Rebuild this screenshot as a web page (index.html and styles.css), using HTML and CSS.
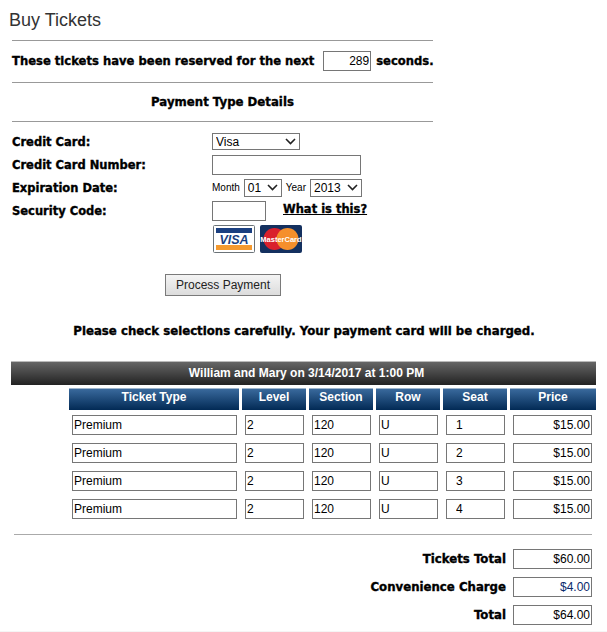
FILE: index.html
```html
<!DOCTYPE html>
<html lang="en">
<head>
	<meta charset="UTF-8">
	<meta name="viewport" content="width=device-width, initial-scale=1.0">
	<title>Buy Tickets</title>
	<link rel="stylesheet" href="styles.css">
</head>
<body>
	<h1 class="page-title">Buy Tickets</h1>
	<div class="payment">
		<div class="timer-row">
			<span class="strong">These tickets have been reserved for the next</span>
			<input type="text" class="field timer-field" value="289" readonly>
			<span class="strong">seconds.</span>
		</div>
		<div class="section-title strong">Payment Type Details</div>
		<div class="form-grid">
			<label class="strong" for="cardType">Credit Card:</label>
			<div class="form-cell">
				<select id="cardType" class="field card-select"><option>Visa</option></select>
			</div>
			<label class="strong" for="cardNumber">Credit Card Number:</label>
			<div class="form-cell">
				<input type="text" id="cardNumber" class="field number-field">
			</div>
			<label class="strong" for="expMonth">Expiration Date:</label>
			<div class="form-cell exp-cell">
				<span class="exp-label">Month</span>
				<select id="expMonth" class="field month-select"><option>01</option></select>
				<span class="exp-label">Year</span>
				<select class="field year-select"><option>2013</option></select>
			</div>
			<label class="strong" for="secCode">Security Code:</label>
			<div class="form-cell sec-cell">
				<input type="text" id="secCode" class="field sec-field">
				<a href="#" class="strong what-link">What is this?</a>
			</div>
		</div>
		<div class="card-logos">
			<svg class="logo" width="42" height="28" viewBox="0 0 42 28">
				<rect x="0.5" y="0.5" width="41" height="27" rx="1" fill="#fff" stroke="#6b7378"/>
				<rect x="3" y="3" width="36" height="5" fill="#1a3f80"/>
				<rect x="3" y="20" width="36" height="5" fill="#f59a2f"/>
				<text x="21" y="18.5" class="visa-text">VISA</text>
			</svg>
			<svg class="logo" width="42" height="28" viewBox="0 0 42 28">
				<rect width="42" height="28" rx="2" fill="#14305f"/>
				<circle cx="14.5" cy="14" r="11" fill="#d9202c"/>
				<circle cx="27.5" cy="14" r="11" fill="#f58f2c"/>
				<text x="21" y="16.5" class="mc-text">MasterCard</text>
			</svg>
		</div>
		<div class="submit-row">
			<button type="button" class="process-btn">Process Payment</button>
		</div>
	</div>
	<p class="notice strong">Please check selections carefully. Your payment card will be charged.</p>
	<div class="event-bar">William and Mary on 3/14/2017 at 1:00 PM</div>
	<div class="ticket-grid">
		<div class="col-head">Ticket Type</div>
		<div class="col-head">Level</div>
		<div class="col-head">Section</div>
		<div class="col-head">Row</div>
		<div class="col-head">Seat</div>
		<div class="col-head">Price</div>

		<input class="field cell" value="Premium" readonly>
		<input class="field cell" value="2" readonly>
		<input class="field cell" value="120" readonly>
		<input class="field cell" value="U" readonly>
		<input class="field cell seat" value="1" readonly>
		<input class="field cell price" value="$15.00" readonly>

		<input class="field cell" value="Premium" readonly>
		<input class="field cell" value="2" readonly>
		<input class="field cell" value="120" readonly>
		<input class="field cell" value="U" readonly>
		<input class="field cell seat" value="2" readonly>
		<input class="field cell price" value="$15.00" readonly>

		<input class="field cell" value="Premium" readonly>
		<input class="field cell" value="2" readonly>
		<input class="field cell" value="120" readonly>
		<input class="field cell" value="U" readonly>
		<input class="field cell seat" value="3" readonly>
		<input class="field cell price" value="$15.00" readonly>

		<input class="field cell" value="Premium" readonly>
		<input class="field cell" value="2" readonly>
		<input class="field cell" value="120" readonly>
		<input class="field cell" value="U" readonly>
		<input class="field cell seat" value="4" readonly>
		<input class="field cell price" value="$15.00" readonly>
	</div>
	<div class="totals">
		<div class="total-row">
			<span class="strong">Tickets Total</span>
			<input class="field total-field" value="$60.00" readonly>
		</div>
		<div class="total-row">
			<span class="strong">Convenience Charge</span>
			<input class="field total-field charge" value="$4.00" readonly>
		</div>
		<div class="total-row">
			<span class="strong">Total</span>
			<input class="field total-field" value="$64.00" readonly>
		</div>
	</div>
	<div class="page-foot"></div>
</body>
</html>
```

FILE: styles.css
```css
body {
	margin: 0;
	background-color: #fff;
	color: #000;
	font-family: "Liberation Sans", Arial, sans-serif;
	font-size: 12px;
	overflow: hidden;
}
.strong {
	font-family: "DejaVu Sans", Verdana, sans-serif;
	font-size: 11.6px;
	font-weight: 700;
	color: #000;
	-webkit-text-stroke: 0.35px #000;
}
.page-title {
	margin: 0;
	padding: 10px 0 0 9px;
	height: 30px;
	box-sizing: border-box;
	font-size: 18px;
	line-height: 21px;
	font-weight: 400;
	color: #333;
}
.field {
	box-sizing: border-box;
	margin: 0;
	padding: 0 1px;
	border: 1px solid #767676;
	border-radius: 0;
	background-color: #fff;
	color: #000;
	font-family: "Liberation Sans", Arial, sans-serif;
	font-size: 12px;
	outline: none;
}
select.field {
	appearance: none;
	background-image: url("data:image/svg+xml,%3Csvg xmlns='http://www.w3.org/2000/svg' width='11' height='7'%3E%3Cpath d='M1 1l4.5 4.5 4.5-4.5' fill='none' stroke='%23222' stroke-width='1.6'/%3E%3C/svg%3E");
	background-repeat: no-repeat;
	background-position: right 3px center;
}
.payment {
	width: 421px;
	margin: 10px 0 0 12px;
	border-top: 1px solid #999;
}
.timer-row {
	display: flex;
	align-items: center;
	height: 42px;
	padding-bottom: 1px;
	box-sizing: border-box;
	border-bottom: 1px solid #999;
	white-space: nowrap;
}
.timer-field {
	width: 48px;
	height: 20px;
	margin: 0 5px 0 9px;
	text-align: right;
}
.section-title {
	height: 38px;
	line-height: 38px;
	text-align: center;
	border-bottom: 1px solid #999;
	font-size: 11.75px;
}
.form-grid {
	display: grid;
	grid-template-columns: 200px 1fr;
	grid-auto-rows: 23px;
	margin-top: 8px;
}
.form-grid .strong {
	font-size: 11.5px;
}
.form-grid label {
	display: flex;
	align-items: center;
}
.form-cell {
	display: flex;
	align-items: center;
}
.card-select {
	width: 88px;
	height: 17px;
	padding-left: 3px;
}
.number-field {
	width: 149px;
	height: 20px;
}
.exp-cell {
	gap: 4px;
}
.exp-label {
	font-size: 10px;
}
.month-select {
	width: 38px;
	height: 18px;
	padding-left: 3px;
}
.year-select {
	width: 52px;
	height: 18px;
	padding-left: 3px;
}
.sec-field {
	width: 54px;
	height: 20px;
}
.what-link {
	margin-left: 17px;
	margin-bottom: 4px;
}
.card-logos {
	display: flex;
	gap: 5px;
	margin: 3px 0 0 201px;
}
.logo {
	display: block;
}
.visa-text {
	font-family: "Liberation Sans", Arial, sans-serif;
	font-size: 12.5px;
	font-weight: 700;
	font-style: italic;
	fill: #1a3f80;
	text-anchor: middle;
}
.mc-text {
	font-family: "Liberation Sans", Arial, sans-serif;
	font-size: 7.5px;
	font-weight: 700;
	fill: #fff;
	text-anchor: middle;
}
.submit-row {
	margin: 21px 0 0 153px;
}
.process-btn {
	width: 116px;
	height: 22px;
	padding: 0;
	border: 1px solid #7a7a7a;
	background: linear-gradient(#f4f4f4, #dcdcdc);
	font-family: "Liberation Sans", Arial, sans-serif;
	font-size: 12px;
	color: #222;
}
.notice {
	margin: 27px 0 0;
	padding-left: 1px;
	height: 16px;
	line-height: 16px;
	text-align: center;
	font-size: 11.78px;
}
.event-bar {
	margin: 22px 11px 0;
	padding-left: 6px;
	height: 24px;
	line-height: 23px;
	text-align: center;
	border-top: 1px solid #bbb;
	box-sizing: border-box;
	background: linear-gradient(#666, #222);
	color: #fff;
	font-weight: 700;
	font-size: 12px;
}
.ticket-grid {
	display: grid;
	grid-template-columns: 170px 64px 64px 64px 64px 86px;
	column-gap: 3px;
	row-gap: 8px;
	margin: 3px 0 0 69px;
	width: 523px;
}
.col-head {
	height: 22px;
	line-height: 16px;
	margin-bottom: -3px;
	text-align: center;
	border-top: 1px solid #9fb5cc;
	box-sizing: border-box;
	background: linear-gradient(#39699c, #022a55);
	color: #fff;
	font-weight: 700;
	font-size: 12px;
}
.cell {
	height: 20px;
	width: calc(100% - 5px);
	margin-left: 3px;
}
.seat {
	padding-left: 9px;
}
.price {
	width: 79px;
	text-align: right;
}
.totals {
	display: flex;
	flex-direction: column;
	gap: 8px;
	margin: 15px 0 0 14px;
	padding-top: 14px;
	border-top: 1px solid #aaa;
	width: 578px;
}
.total-row {
	display: flex;
	justify-content: flex-end;
	align-items: center;
	gap: 7px;
}
.total-row .strong {
	font-size: 11.75px;
}
.total-field {
	width: 79px;
	height: 20px;
	text-align: right;
}
.charge {
	color: #0a2a6b;
}
.page-foot {
	height: 10px;
	margin-top: 6px;
	background-color: #f5f5f5;
}
```
